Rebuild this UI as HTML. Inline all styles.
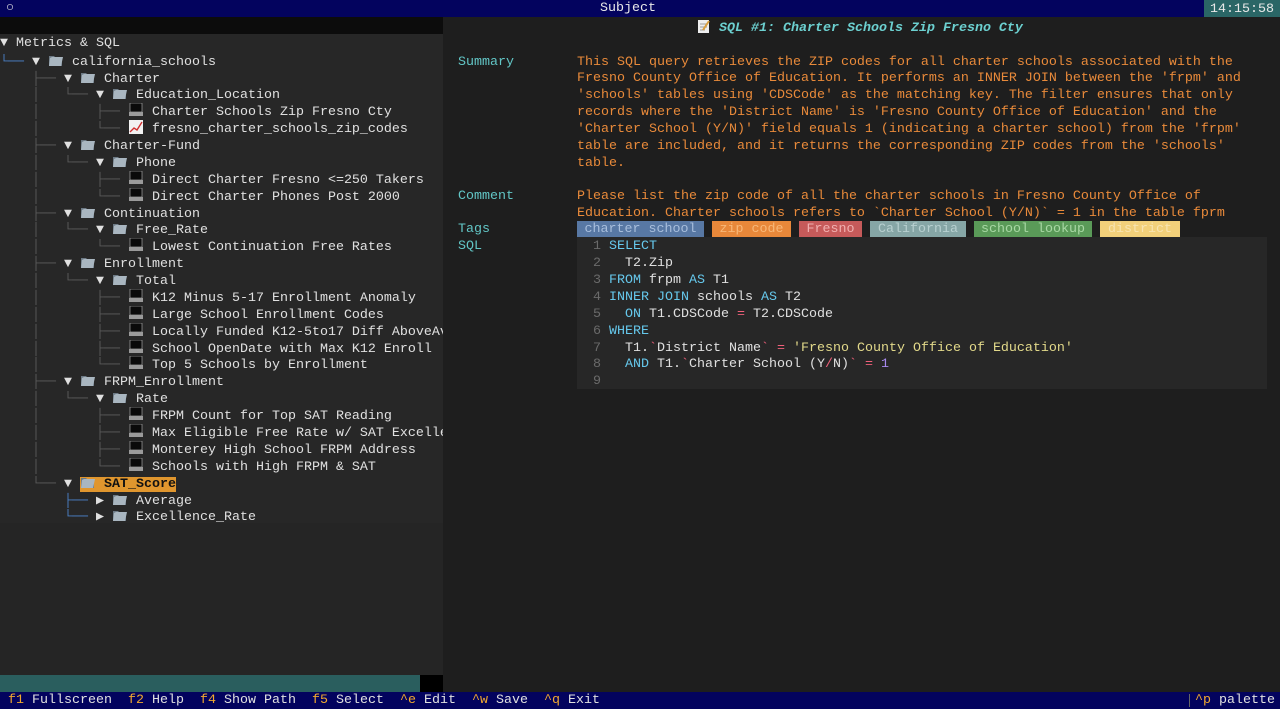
<!DOCTYPE html>
<html><head><meta charset="utf-8"><style>
*{margin:0;padding:0;box-sizing:border-box}
body{width:1280px;height:709px;overflow:hidden;background:#1e1e1e;font-family:"Liberation Mono","DejaVu Sans Mono",monospace;font-size:13.33px;color:#e0e0e0;position:relative}
.r{position:absolute;height:16.88px;line-height:16.88px;white-space:pre}
.sh{margin-top:2px}
#top{position:absolute;left:0;top:0;width:1280px;height:17px;background:#03035e;color:#e8e8e8}
#left{position:absolute;left:0;top:17px;width:443px;height:675px;background:#272727;overflow:hidden}
.g{color:#5a5a5a}.b{color:#4a7fc4}
.ic{display:inline-block;width:16px;height:14px;vertical-align:-2px}
.lb{color:#62c6c6}.v{color:#e98a3a}
.k{color:#66c8ec}.s{color:#e2d98a}.o{color:#f0607a}.n{color:#a88af0}.ln{color:#6a6a6a}
.tag{position:absolute;top:221px;height:16px;line-height:17px;text-align:center}
#foot{position:absolute;left:0;top:692px;width:1280px;height:17px;background:#03035e;color:#e0e0e0;line-height:17px;white-space:pre}
.fk{color:#f0a830}
</style></head><body>
<svg width="0" height="0" style="position:absolute"><defs>
<symbol id="fd" viewBox="0 0 16 14"><path d="M1 3h5l1 1h7v9H1z" fill="#6d7a85"/><path d="M2 5l2-1h11l-2 9H1z" fill="#a9b6c0"/></symbol>
<symbol id="pc" viewBox="0 0 16 14"><rect x="2" y="0" width="12" height="9" fill="#0a0a0a" stroke="#bbb" stroke-width=".6"/><rect x="1" y="9" width="14" height="4" fill="#9a9a9a"/></symbol>
<symbol id="ch" viewBox="0 0 16 14"><rect x="1" y="0" width="14" height="14" fill="#f2f2f2"/><path d="M2 12l4-4 3 2 5-8" stroke="#d03030" stroke-width="1.4" fill="none"/></symbol>
</defs></svg>
<div id="top"><span class="r" style="left:6px;top:1px">○</span><span class="r" style="left:600px;top:1px">Subject</span><span class="r" style="left:1204px;top:0;height:17px;line-height:19px;width:76px;background:#2a6666;text-align:center">14:15:58</span></div>
<div id="left">
<div style="position:absolute;left:0;top:0;width:443px;height:17px;background:#0c0c0c"></div>
<div style="position:absolute;left:0;top:506px;width:443px;height:152px;background:#252525"></div>
<div style="position:absolute;left:0;top:658px;width:420px;height:17px;background:#2a5e5e"></div>
<div style="position:absolute;left:420px;top:658px;width:23px;height:17px;background:#000"></div>
<div id="tree" style="position:absolute;left:0;top:-15px;width:443px"></div>
</div>
<div class="r sh" style="left:697px;top:17px;color:#6cd0d0;font-weight:bold;font-style:italic"><svg class="ic" style="width:14px"><rect x="1" y="1" width="11" height="13" fill="#eee"/><path d="M3 5h7M3 8h7M3 11h5" stroke="#999"/><path d="M12 2l-6 9" stroke="#d9a040" stroke-width="2"/></svg> SQL #1: Charter Schools Zip Fresno Cty</div>
<div class="r lb sh" style="left:458px;top:52.6px">Summary</div>
<div class="r v sh" style="left:577px;top:52.6px;line-height:16.88px">This SQL query retrieves the ZIP codes for all charter schools associated with the
Fresno County Office of Education. It performs an INNER JOIN between the 'frpm' and
'schools' tables using 'CDSCode' as the matching key. The filter ensures that only
records where the 'District Name' is 'Fresno County Office of Education' and the
'Charter School (Y/N)' field equals 1 (indicating a charter school) from the 'frpm'
table are included, and it returns the corresponding ZIP codes from the 'schools'
table.</div>
<div class="r lb sh" style="left:458px;top:186.7px">Comment</div>
<div class="r v sh" style="left:577px;top:186.7px">Please list the zip code of all the charter schools in Fresno County Office of
Education. Charter schools refers to `Charter School (Y/N)` = 1 in the table fprm</div>
<div class="r lb sh" style="left:458px;top:220.4px">Tags</div>
<div class="tag" style="left:577px;width:127px;background:#5878a4;color:#a8bedc">charter school</div>
<div class="tag" style="left:712px;width:79px;background:#e8883a;color:#f8b878">zip code</div>
<div class="tag" style="left:799px;width:63px;background:#c65a5a;color:#f0b0b0">Fresno</div>
<div class="tag" style="left:870px;width:96px;background:#86a6a6;color:#b8d0d0">California</div>
<div class="tag" style="left:974px;width:118px;background:#5a9a58;color:#a8d8a4">school lookup</div>
<div class="tag" style="left:1100px;width:80px;background:#f2d07a;color:#f8e4b0">district</div>
<div class="r lb sh" style="left:458px;top:237.3px">SQL</div>
<div style="position:absolute;left:577px;top:237.3px;width:690px;height:151.9px;background:#272727"></div>
<div class="r sh" style="left:593px;top:237.3px;line-height:16.88px"><span class="ln">1</span> <span class="k">SELECT</span>
<span class="ln">2</span>   T2.Zip
<span class="ln">3</span> <span class="k">FROM</span> frpm <span class="k">AS</span> T1
<span class="ln">4</span> <span class="k">INNER JOIN</span> schools <span class="k">AS</span> T2
<span class="ln">5</span>   <span class="k">ON</span> T1.CDSCode <span class="o">=</span> T2.CDSCode
<span class="ln">6</span> <span class="k">WHERE</span>
<span class="ln">7</span>   T1.<span class="o">`</span>District Name<span class="o">`</span> <span class="o">=</span> <span class="s">'Fresno County Office of Education'</span>
<span class="ln">8</span>   <span class="k">AND</span> T1.<span class="o">`</span>Charter School (Y<span class="o">/</span>N)<span class="o">`</span> <span class="o">=</span> <span class="n">1</span>
<span class="ln">9</span></div>
<div id="foot"> <span class="fk">f1</span> Fullscreen  <span class="fk">f2</span> Help  <span class="fk">f4</span> Show Path  <span class="fk">f5</span> Select  <span class="fk">^e</span> Edit  <span class="fk">^w</span> Save  <span class="fk">^q</span> Exit<span style="position:absolute;left:1189px;top:2px;width:1px;height:13px;background:#666"></span><span style="position:absolute;left:1195px"><span class="fk">^p</span> palette</span></div>
<script>
const F='<svg class="ic"><use href="#fd"/></svg>',P='<svg class="ic"><use href="#pc"/></svg>',C='<svg class="ic"><use href="#ch"/></svg>';
const g=s=>'<span class="g">'+s+'</span>',b=s=>'<span class="b">'+s+'</span>';
const rows=[
[2,'▼ Metrics &amp; SQL'],
[3,b('└──')+' ▼ '+F+' california_schools'],
[4,g('    ├──')+' ▼ '+F+' Charter'],
[5,g('    │   └──')+' ▼ '+F+' Education_Location'],
[6,g('    │       ├──')+' '+P+' Charter Schools Zip Fresno Cty'],
[7,g('    │       └──')+' '+C+' fresno_charter_schools_zip_codes'],
[8,g('    ├──')+' ▼ '+F+' Charter-Fund'],
[9,g('    │   └──')+' ▼ '+F+' Phone'],
[10,g('    │       ├──')+' '+P+' Direct Charter Fresno &lt;=250 Takers'],
[11,g('    │       └──')+' '+P+' Direct Charter Phones Post 2000'],
[12,g('    ├──')+' ▼ '+F+' Continuation'],
[13,g('    │   └──')+' ▼ '+F+' Free_Rate'],
[14,g('    │       └──')+' '+P+' Lowest Continuation Free Rates'],
[15,g('    ├──')+' ▼ '+F+' Enrollment'],
[16,g('    │   └──')+' ▼ '+F+' Total'],
[17,g('    │       ├──')+' '+P+' K12 Minus 5-17 Enrollment Anomaly'],
[18,g('    │       ├──')+' '+P+' Large School Enrollment Codes'],
[19,g('    │       ├──')+' '+P+' Locally Funded K12-5to17 Diff AboveAvg'],
[20,g('    │       ├──')+' '+P+' School OpenDate with Max K12 Enroll'],
[21,g('    │       └──')+' '+P+' Top 5 Schools by Enrollment'],
[22,g('    ├──')+' ▼ '+F+' FRPM_Enrollment'],
[23,g('    │   └──')+' ▼ '+F+' Rate'],
[24,g('    │       ├──')+' '+P+' FRPM Count for Top SAT Reading'],
[25,g('    │       ├──')+' '+P+' Max Eligible Free Rate w/ SAT Excellence'],
[26,g('    │       ├──')+' '+P+' Monterey High School FRPM Address'],
[27,g('    │       └──')+' '+P+' Schools with High FRPM &amp; SAT'],
[28,g('    └──')+' ▼ <span style="background:#e0962e;color:#111;font-weight:bold">'+F+' SAT_Score</span>'],
[29,'        '+b('├──')+' ▶ '+F+' Average'],
[30,'        '+b('└──')+' ▶ '+F+' Excellence_Rate']];
const t=document.getElementById('tree');
t.innerHTML=rows.map(([r,h])=>'<div class="r" style="left:0;top:'+(r*16.88).toFixed(2)+'px">'+h+'</div>').join('');
</script>
</body></html>
